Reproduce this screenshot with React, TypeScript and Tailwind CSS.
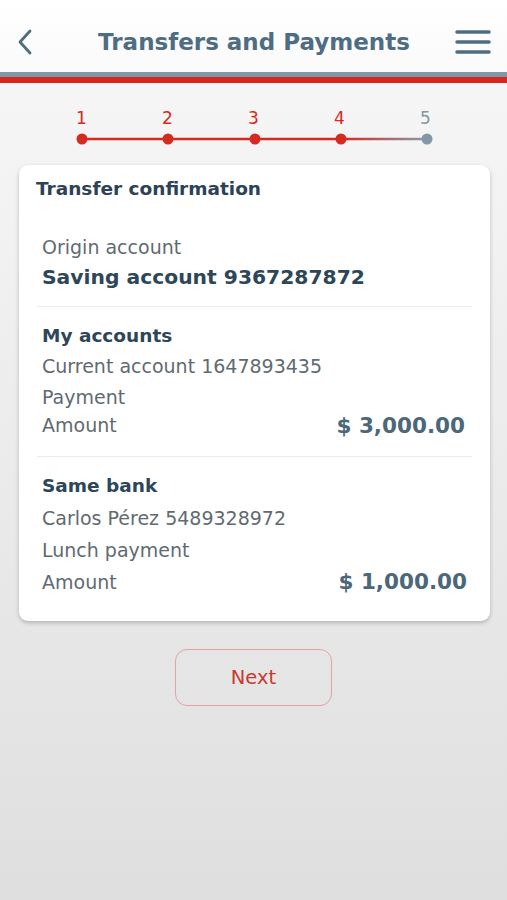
import React from "react";

const font = { fontFamily: '"DejaVu Sans", Verdana, sans-serif' };

function Stepper() {
  const xs = [43, 129, 216, 302, 388];
  return (
    <div className="flex flex-col items-center pt-[25px]">
      <div className="flex w-[430px]">
        {["1", "2", "3", "4", "5"].map((n, i) => (
          <div
            key={n}
            className={`w-[86px] text-center text-[17px] leading-[20px] ${i < 4 ? "text-[#d42a20]" : "text-[#8596a3]"}`}
          >
            {n}
          </div>
        ))}
      </div>
      <svg width="430" height="14" viewBox="0 0 430 14" className="mt-[4px]">
        <defs>
          <linearGradient id="lastSeg" gradientUnits="userSpaceOnUse" x1="302" y1="7" x2="388" y2="7">
            <stop offset="0" stopColor="#d42a20" />
            <stop offset="1" stopColor="#8a9cab" />
          </linearGradient>
        </defs>
        <line x1={xs[0]} y1="7" x2={xs[3]} y2="7" stroke="#d42a20" strokeWidth="2.5" />
        <line x1={xs[3]} y1="7" x2={xs[4]} y2="7" stroke="url(#lastSeg)" strokeWidth="2.5" />
        {xs.map((x, i) => (
          <circle key={i} cx={x} cy="7" r="5.5" fill={i < 4 ? "#d42a20" : "#8397a8"} />
        ))}
      </svg>
    </div>
  );
}

export default function App() {
  return (
    <div
      style={font}
      className="min-h-[900px] w-full bg-gradient-to-b from-[#f8f8f8] to-[#dfdfdf] flex flex-col"
    >
      <div className="h-[72px] bg-gradient-to-b from-white to-[#fafafa] flex items-center justify-between pl-[16px] pr-[16px] pt-[11px]">
        <svg width="20" height="26" viewBox="0 0 20 26">
          <path d="M14 2 L4 13 L14 24" fill="none" stroke="#4f6d82" strokeWidth="2.8" strokeLinecap="round" strokeLinejoin="round" />
        </svg>
        <div className="text-[23px] font-bold text-[#4f6d82] leading-[28px] ml-[17px]">
          Transfers and Payments
        </div>
        <svg width="36" height="26" viewBox="0 0 36 26">
          <line x1="2" y1="3" x2="34" y2="3" stroke="#4f6d82" strokeWidth="3.5" strokeLinecap="round" />
          <line x1="2" y1="13" x2="34" y2="13" stroke="#4f6d82" strokeWidth="3.5" strokeLinecap="round" />
          <line x1="2" y1="23" x2="34" y2="23" stroke="#4f6d82" strokeWidth="3.5" strokeLinecap="round" />
        </svg>
      </div>
      <div className="h-[5px] bg-[#7f97a8]" />
      <div className="h-[6px] bg-[#d8261c]" />

      <Stepper />

      <div className="ml-[19px] mr-[17px] mt-[19px] bg-white rounded-[9px] shadow-[0_2px_4px_rgba(0,0,0,0.22)]">
        <div className="pt-[12px] pl-[17px] text-[18.5px] font-bold text-[#2b4257] leading-[24px]">
          Transfer confirmation
        </div>

        <div className="mt-[31px] px-[23px] pb-[14px]">
          <div className="text-[19px] text-[#5f6a72] leading-[30px]">Origin account</div>
          <div className="text-[20.3px] font-bold text-[#2d4659] leading-[30px]">Saving account 9367287872</div>
        </div>
        <div className="mx-[18px] h-px bg-[#ececec]" />

        <div className="pt-[13px] px-[23px] pb-[15px]">
          <div className="text-[18.5px] font-bold text-[#2d4659] leading-[31px]">My accounts</div>
          <div className="text-[19px] text-[#5f6a72] leading-[31px]">Current account 1647893435</div>
          <div className="text-[19px] text-[#5f6a72] leading-[31px]">Payment</div>
          <div className="flex items-center justify-between -mt-[3px] pr-[2px] leading-[31px]">
            <span className="text-[19px] text-[#5f6a72]">Amount</span>
            <span className="text-[21.5px] font-bold text-[#4b687b]">$ 3,000.00</span>
          </div>
        </div>
        <div className="mx-[18px] h-px bg-[#ececec]" />

        <div className="pt-[13px] px-[23px] pb-[23px]">
          <div className="text-[18.5px] font-bold text-[#2d4659] leading-[32px]">Same bank</div>
          <div className="text-[19px] text-[#5f6a72] leading-[32px]">Carlos Pérez 5489328972</div>
          <div className="text-[19px] text-[#5f6a72] leading-[32px]">Lunch payment</div>
          <div className="flex items-center justify-between leading-[32px]">
            <span className="text-[19px] text-[#5f6a72]">Amount</span>
            <span className="text-[21.5px] font-bold text-[#4b687b]">$ 1,000.00</span>
          </div>
        </div>
      </div>

      <div className="flex justify-center mt-[28px]">
        <button className="w-[157px] h-[57px] rounded-[12px] border border-[#e2a3a3] bg-transparent text-[19.5px] text-[#c83a30]">
          Next
        </button>
      </div>
    </div>
  );
}
